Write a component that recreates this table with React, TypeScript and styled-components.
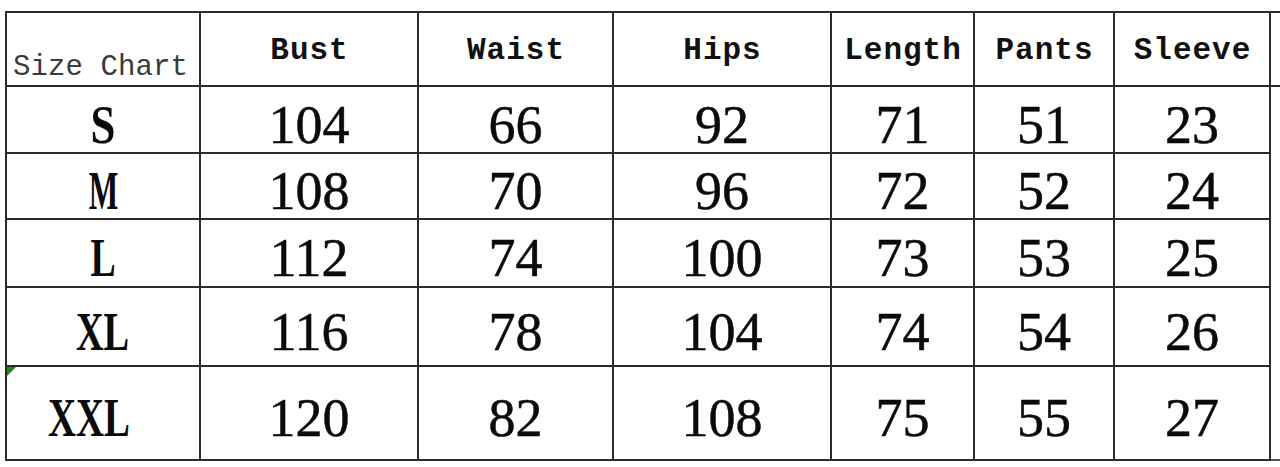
import React from "react";
import styled, { createGlobalStyle } from "styled-components";

const GlobalStyle = createGlobalStyle`
  html, body { margin: 0; padding: 0; background: #ffffff; }
  body { width: 1280px; height: 467px; overflow: hidden; }
`;

const Page = styled.div`
  padding: 11px 0 0 5px;
  background: #ffffff;
`;

const Chart = styled.div`
  display: grid;
  grid-template-columns: 194px 218px 195px 218px 143px 140px 156px 9px;
  grid-template-rows: 74px 67px 66px 68px 79px 94px;
  border-top: 2px solid #2a2a2a;
  border-left: 2px solid #2a2a2a;
  width: max-content;
`;

const Cell = styled.div`
  position: relative;
  display: flex;
  justify-content: center;
  align-items: center;
  border-right: 2px solid #2a2a2a;
  border-bottom: 2px solid #2a2a2a;
  box-sizing: border-box;
`;

const HeadCell = styled(Cell)`
  padding-top: 2px;
  padding-left: 1px;
  font-family: "Liberation Mono", "DejaVu Sans Mono", monospace;
  font-weight: bold;
  font-size: 31px;
  letter-spacing: 1px;
  color: #111;
`;

const CornerCell = styled(Cell)`
  align-items: flex-end;
  justify-content: flex-start;
  padding: 0 0 0 6px;
  font-family: "Liberation Mono", "DejaVu Sans Mono", monospace;
  font-size: 29px;
  letter-spacing: 0.1px;
  color: #3a3a3a;
  line-height: 34px;
`;

const ValueCell = styled(Cell)<{ $shift?: number }>`
  padding-top: 10px;
  padding-right: ${(p) => (p.$shift ? `${p.$shift}px` : "0")};
  font-family: "Liberation Serif", "Times New Roman", serif;
  font-size: 54px;
  color: #0b0b0b;
  line-height: 1;
  -webkit-text-stroke: 0.5px #0b0b0b;
`;

const SizeLabel = styled.span<{ $squeeze: number }>`
  display: inline-block;
  font-weight: bold;
  -webkit-text-stroke: 0;
  transform: scaleX(${(p) => p.$squeeze});
`;

const EdgeCell = styled.div<{ $head?: boolean; $bottom?: boolean }>`
  border-left: 1px solid #9a9a9a;
  margin-left: -1px;
  border-bottom: ${(p) => (p.$head ? "2px solid #2a2a2a" : p.$bottom ? "2px solid #555" : "none")};
  box-sizing: border-box;
`;

const Flag = styled.span`
  position: absolute;
  left: 0;
  top: 0;
  width: 0;
  height: 0;
  border-top: 9px solid #1e8a1e;
  border-right: 9px solid transparent;
`;

const headers = ["Bust", "Waist", "Hips", "Length", "Pants", "Sleeve"];

const rows: { size: string; squeeze: number; values: number[]; shift?: number }[] = [
  { size: "S", squeeze: 0.83, values: [104, 66, 92, 71, 51, 23] },
  { size: "M", squeeze: 0.58, values: [108, 70, 96, 72, 52, 24] },
  { size: "L", squeeze: 0.7, values: [112, 74, 100, 73, 53, 25] },
  { size: "XL", squeeze: 0.71, values: [116, 78, 104, 74, 54, 26] },
  { size: "XXL", squeeze: 0.72, values: [120, 82, 108, 75, 55, 27], shift: 28 },
];

export default function App() {
  return (
    <>
      <GlobalStyle />
      <Page>
        <Chart>
          <CornerCell>Size Chart</CornerCell>
          {headers.map((h) => (
            <HeadCell key={h}>{h}</HeadCell>
          ))}
          <EdgeCell $head />
          {rows.map((r, i) => (
            <React.Fragment key={r.size}>
              <ValueCell $shift={r.shift}>
                {i === rows.length - 1 && <Flag />}
                <SizeLabel $squeeze={r.squeeze}>{r.size}</SizeLabel>
              </ValueCell>
              {r.values.map((v, j) => (
                <ValueCell key={j}>{v}</ValueCell>
              ))}
              <EdgeCell $bottom={i === rows.length - 1} />
            </React.Fragment>
          ))}
        </Chart>
      </Page>
    </>
  );
}
